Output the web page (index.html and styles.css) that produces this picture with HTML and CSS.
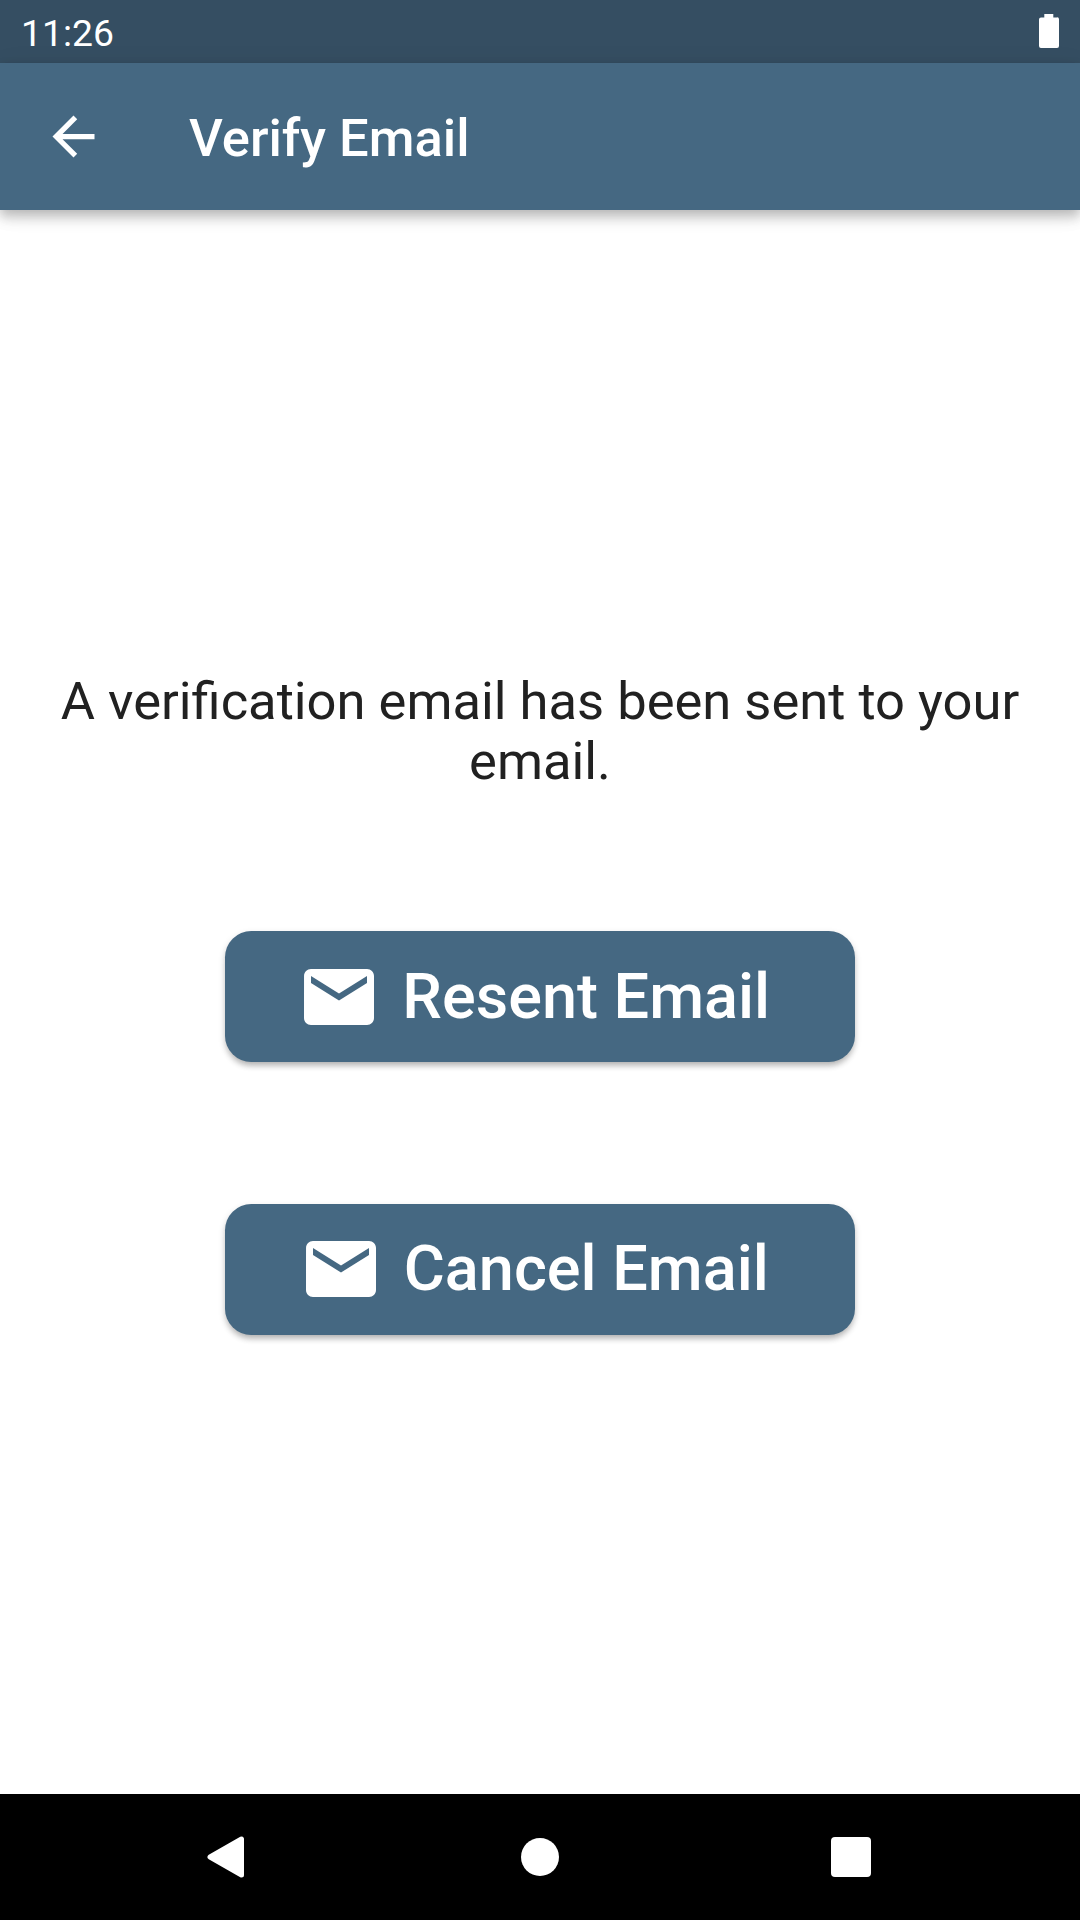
FILE: index.html
```html
<!DOCTYPE html>
<html lang="en">
<head>
<meta charset="utf-8">
<title>Verify Email</title>
<link rel="stylesheet" href="styles.css">
</head>
<body>
<div class="status-bar">
  <span class="time">11:26</span>
  <svg class="battery" viewBox="0 0 20 34"><path d="M5.3 0h9v3.4h3.4a2 2 0 0 1 2.3 2V32a2 2 0 0 1-2 2H2a2 2 0 0 1-2-2V5.4a2 2 0 0 1 2-2h3.3z"/></svg>
</div>
<header class="app-bar">
  <svg class="back" viewBox="0 0 24 24"><path d="M20 11H7.83l5.59-5.59L12 4l-8 8 8 8 1.41-1.41L7.83 13H20v-2z"/></svg>
  <h1 class="title">Verify Email</h1>
</header>
<main class="content">
  <p class="message">A verification email has been sent to your email.</p>
  <button class="button">
    <svg class="mail" viewBox="0 0 24 24"><path d="M20 4H4c-1.1 0-1.99.9-1.99 2L2 18c0 1.1.9 2 2 2h16c1.1 0 2-.9 2-2V6c0-1.1-.9-2-2-2zm0 4l-8 5-8-5V6l8 5 8-5v2z"/></svg>
    <span>Resent Email</span>
  </button>
  <button class="button">
    <svg class="mail" viewBox="0 0 24 24"><path d="M20 4H4c-1.1 0-1.99.9-1.99 2L2 18c0 1.1.9 2 2 2h16c1.1 0 2-.9 2-2V6c0-1.1-.9-2-2-2zm0 4l-8 5-8-5V6l8 5 8-5v2z"/></svg>
    <span>Cancel Email</span>
  </button>
</main>
<nav class="nav-bar">
  <svg class="nav-back" viewBox="0 0 38 42"><path d="M3 21 34.500 3V39Z"/></svg>
  <span class="nav-home"></span>
  <span class="nav-recent"></span>
</nav>
</body>
</html>
```
FILE: styles.css
```css
* { box-sizing: border-box; }

body {
  margin: 0;
  height: 1920px;
  display: flex;
  flex-direction: column;
  background: #fff;
  font-family: Roboto, sans-serif;
}

svg { display: block; flex: none; fill: #fff; }

.status-bar {
  height: 63px;
  flex: none;
  display: flex;
  justify-content: space-between;
  align-items: flex-start;
  padding: 14px 21px 0 21px;
  background: #354e62;
  color: #fff;
}

.time { font-size: 37.3px; line-height: 38px; }
.battery { width: 20px; height: 34px; }

.app-bar {
  height: 147px;
  flex: none;
  display: flex;
  align-items: center;
  gap: 84px;
  padding: 0 42px;
  background: #456882;
  color: #fff;
  box-shadow: 0 5px 11px rgba(0, 0, 0, 0.2), 0 10px 13px rgba(0, 0, 0, 0.08), 0 3px 26px rgba(0, 0, 0, 0.06);
}

.back { width: 63px; height: 63px; }
.title { margin: 0; padding-top: 2px; font-size: 52.5px; font-weight: 500; line-height: 62px; }

.content {
  flex: 1;
  display: flex;
  flex-direction: column;
  align-items: center;
  padding: 461px 52.5px 0;
}

.message {
  margin: 0 0 140.1px;
  color: #212121;
  font-size: 52.5px;
  line-height: 60px;
  text-align: center;
}

.button {
  width: 630px;
  height: 131.25px;
  flex: none;
  display: flex;
  align-items: center;
  justify-content: center;
  gap: 21px;
  margin: 0 0 141.25px;
  padding: 0 44px 0 31.5px;
  border: 0;
  border-radius: 26.25px;
  background: #456882;
  color: #fff;
  font: 500 63px/74px Roboto, sans-serif;
  box-shadow: 0 5px 6px -2px rgba(0, 0, 0, 0.2), 0 3px 7px rgba(0, 0, 0, 0.16);
}

.mail { width: 84px; height: 84px; }

.nav-bar {
  height: 126px;
  flex: none;
  display: flex;
  align-items: center;
  padding-left: 206.5px;
  background: #000;
}

.nav-back { width: 38px; height: 42px; stroke: #fff; stroke-width: 5; stroke-linejoin: round; }
.nav-home { width: 38px; height: 38px; margin-left: 276.5px; border-radius: 50%; background: #fff; }
.nav-recent { width: 40px; height: 40px; margin-left: 272px; border-radius: 4px; background: #fff; }
```
